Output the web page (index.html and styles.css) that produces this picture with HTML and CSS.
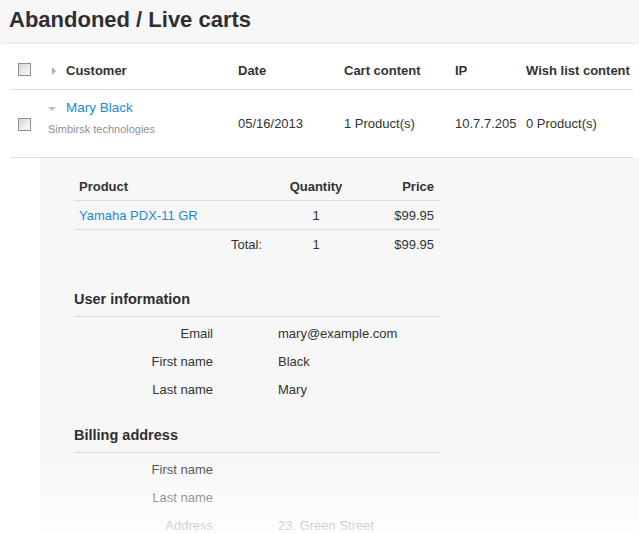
FILE: index.html
```html
<!DOCTYPE html>
<html lang="en">
<head>
<meta charset="utf-8">
<title>Abandoned / Live carts</title>
<link rel="stylesheet" href="styles.css">
</head>
<body>
<header class="topbar">
  <h1 class="title">Abandoned / Live carts</h1>
</header>

<div class="carts">
  <div class="crow chead">
    <div class="c-check"><span class="checkbox"></span></div>
    <div class="c-cust"><span class="arrow-right"></span><span>Customer</span></div>
    <div>Date</div>
    <div>Cart content</div>
    <div>IP</div>
    <div>Wish list content</div>
  </div>
  <div class="crow cdata">
    <div class="c-check"><span class="checkbox"></span></div>
    <div class="c-cust-data">
      <div class="name-line"><span class="arrow-down"></span><a class="link" href="#">Mary Black</a></div>
      <div class="company">Simbirsk technologies</div>
    </div>
    <div>05/16/2013</div>
    <div>1 Product(s)</div>
    <div>10.7.7.205</div>
    <div>0 Product(s)</div>
  </div>
</div>

<div class="details">
  <div class="products">
    <div class="prow phead">
      <div class="p-name">Product</div>
      <div class="p-qty">Quantity</div>
      <div class="p-price">Price</div>
    </div>
    <div class="prow">
      <div class="p-name"><a class="link" href="#">Yamaha PDX-11 GR</a></div>
      <div class="p-qty">1</div>
      <div class="p-price">$99.95</div>
    </div>
    <div class="prow ptotal">
      <div class="p-name p-total-label">Total:</div>
      <div class="p-qty">1</div>
      <div class="p-price">$99.95</div>
    </div>
  </div>

  <section class="info first">
    <h2 class="info-title">User information</h2>
    <div class="fields">
      <div class="label">Email</div><div class="value">mary@example.com</div>
      <div class="label">First name</div><div class="value">Black</div>
      <div class="label">Last name</div><div class="value">Mary</div>
    </div>
  </section>

  <section class="info">
    <h2 class="info-title">Billing address</h2>
    <div class="fields">
      <div class="label">First name</div><div class="value"></div>
      <div class="label">Last name</div><div class="value"></div>
      <div class="label">Address</div><div class="value">23, Green Street</div>
    </div>
  </section>
</div>

<div class="fade"></div>
</body>
</html>
```
FILE: styles.css
```css
html, body {
  margin: 0;
  padding: 0;
  background: #ffffff;
}
body {
  font-family: "Liberation Sans", Arial, sans-serif;
  font-size: 13px;
  color: #333333;
  overflow: hidden;
}
.link {
  color: #1d8ad0;
  text-decoration: none;
}

/* top bar */
.topbar {
  height: 42px;
  background: #f7f7f7;
  box-shadow: 0 1px 3px rgba(0, 0, 0, 0.13);
  position: relative;
  z-index: 2;
}
.title {
  margin: 0;
  padding-left: 9px;
  font-size: 22px;
  font-weight: bold;
  line-height: 39px;
  color: #2f2f2f;
}

/* carts list */
.carts {
  margin: 8px 0 0 10px;
  width: 623px;
}
.crow {
  display: grid;
  grid-template-columns: 30px 198px 106px 111px 71px 1fr;
  align-items: center;
  border-bottom: 1px solid #dedede;
}
.chead {
  height: 37px;
  padding-top: 2px;
  font-weight: bold;
}
.cdata {
  height: 67px;
}
.c-check {
  padding-left: 8px;
  display: flex;
  align-items: center;
}
.chead .c-check {
  margin-top: -2px;
}
.cdata .c-check {
  padding-top: 1px;
}
.checkbox {
  display: inline-block;
  width: 11px;
  height: 11px;
  border: 1px solid #8f8f8f;
  background: linear-gradient(135deg, #d4d4d4 0%, #eeeeee 60%, #f8f8f8 100%);
}
.c-cust {
  padding-left: 12px;
  display: flex;
  align-items: center;
  gap: 10px;
}
.arrow-right {
  width: 0;
  height: 0;
  border-top: 4px solid transparent;
  border-bottom: 4px solid transparent;
  border-left: 4px solid #b0b0b0;
}
.c-cust-data {
  align-self: start;
  padding: 9px 0 0 8px;
}
.name-line {
  display: flex;
  align-items: center;
  gap: 10px;
  line-height: 18px;
  font-size: 13.5px;
}
.arrow-down {
  width: 0;
  height: 0;
  border-left: 4px solid transparent;
  border-right: 4px solid transparent;
  border-top: 4px solid #bbbbbb;
  margin-top: 1px;
}
.company {
  margin-top: 4px;
  font-size: 11px;
  line-height: 16px;
  color: #8f8f8f;
}

/* details panel */
.details {
  margin-left: 40px;
  background: #f7f7f7;
  padding: 14px 0 10px 34px;
}
.products {
  width: 366px;
}
.prow {
  display: grid;
  grid-template-columns: 193px 98px 75px;
  align-items: center;
  height: 28px;
  border-bottom: 1px solid #dcdcdc;
}
.ptotal {
  border-bottom: none;
}
.phead {
  font-weight: bold;
}
.p-name {
  padding-left: 5px;
}
.p-total-label {
  text-align: right;
  padding: 0 5px 0 0;
}
.p-qty {
  text-align: center;
}
.p-price {
  text-align: right;
  padding-right: 6px;
}

.info {
  width: 366px;
  margin-top: 22px;
}
.info.first {
  margin-top: 31px;
}
.info-title {
  margin: 0;
  font-size: 14.5px;
  font-weight: bold;
  line-height: 20px;
  padding-bottom: 7px;
  border-bottom: 1px solid #dcdcdc;
  color: #2f2f2f;
}
.fields {
  display: grid;
  grid-template-columns: 139px 1fr;
  column-gap: 65px;
  grid-auto-rows: 28px;
  align-items: center;
  padding-top: 2px;
}
.label {
  text-align: right;
}

/* bottom fade overlay */
.fade {
  position: fixed;
  left: 0;
  right: 0;
  bottom: 0;
  height: 80px;
  background: linear-gradient(to bottom, rgba(255, 255, 255, 0) 0%, rgba(255, 255, 255, 0.85) 100%);
  pointer-events: none;
}
```
